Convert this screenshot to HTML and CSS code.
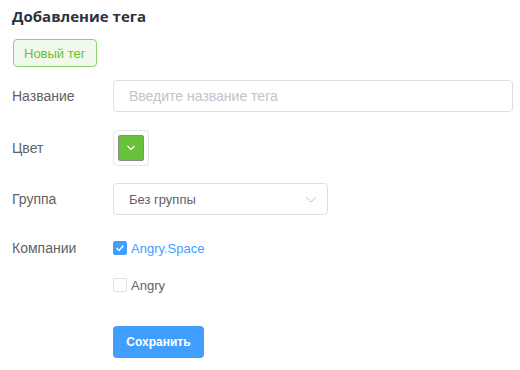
FILE: index.html
```html
<!DOCTYPE html>
<html lang="ru">
<head>
<meta charset="utf-8">
<link rel="stylesheet" href="styles.css">
</head>
<body>
<div class="page">
  <h1 class="title">Добавление тега</h1>
  <div class="preview"><span class="tag">Новый тег</span></div>
  <form class="form">
    <div class="row">
      <label class="label">Название</label>
      <div class="control">
        <div class="input"><span class="placeholder">Введите название тега</span></div>
      </div>
    </div>
    <div class="row row-color">
      <label class="label">Цвет</label>
      <div class="control">
        <div class="picker">
          <div class="swatch">
            <svg width="10" height="6" viewBox="0 0 10 6"><path d="M1.5 1 L5 4.5 L8.5 1" fill="none" stroke="#fff" stroke-width="1.2"/></svg>
          </div>
        </div>
      </div>
    </div>
    <div class="row">
      <label class="label">Группа</label>
      <div class="control">
        <div class="select">
          <span class="value">Без группы</span>
          <svg class="arrow" width="12" height="7" viewBox="0 0 12 7"><path d="M1 1 L6 6 L11 1" fill="none" stroke="#c0c4cc" stroke-width="1"/></svg>
        </div>
      </div>
    </div>
    <div class="row row-companies">
      <label class="label">Компании</label>
      <div class="control checks">
        <div class="check checked">
          <span class="box"><svg width="10" height="8" viewBox="0 0 10 8"><path d="M1.5 4 L4 6.5 L8.5 1.5" fill="none" stroke="#fff" stroke-width="1.4"/></svg></span>
          <span class="check-label">Angry.Space</span>
        </div>
        <div class="check">
          <span class="box"></span>
          <span class="check-label">Angry</span>
        </div>
      </div>
    </div>
    <div class="row row-actions">
      <div class="label"></div>
      <div class="control"><button type="button" class="btn">Сохранить</button></div>
    </div>
  </form>
</div>
</body>
</html>
```
FILE: styles.css
```css
* { box-sizing: border-box; }
html, body { margin: 0; padding: 0; background: #fff; }
body { font-family: "Liberation Sans", Arial, sans-serif; color: #606266; }
.page { padding: 6px 12px 0 12px; width: 520px; }
.title {
  margin: 0;
  font-family: "Open Sans", "Liberation Sans", sans-serif;
  font-weight: 700;
  font-size: 15px;
  line-height: 20px;
  color: #2b3240;
}
.preview { margin-top: 13px; height: 28px; display: flex; }
.tag {
  display: inline-flex; align-items: center;
  height: 28px; padding: 0 10px; margin-left: 1px;
  font-size: 13px;
  color: #67c23a;
  background: #f0f9eb;
  border: 1px solid #8fd16a;
  border-radius: 4px;
}
.form { margin-top: 13px; display: flex; flex-direction: column; }
.row { display: flex; align-items: center; min-height: 32px; margin-bottom: 18px; }
.label { width: 101px; flex: none; font-size: 14px; color: #606266; }
.control { flex: 1; }
.input {
  width: 400px; height: 32px;
  border: 1px solid #dcdfe6; border-radius: 4px;
  display: flex; align-items: center; padding: 0 15px;
  font-size: 14px;
}
.placeholder { color: #c0c4cc; }
.row-color { min-height: 36px; margin-bottom: 17px; }
.picker {
  width: 36px; height: 36px;
  border: 1px solid #e6e6e6; border-radius: 4px;
  padding: 4px;
}
.swatch {
  width: 100%; height: 100%;
  background: #67c23a;
  border: 1px solid #8a8a8a;
  border-radius: 2px;
  display: flex; align-items: center; justify-content: center;
}
.select {
  width: 215px; height: 32px;
  border: 1px solid #dcdfe6; border-radius: 4px;
  display: flex; align-items: center; justify-content: space-between;
  padding: 0 10px 0 15px;
  font-size: 13px; color: #606266;
}
.row-companies { align-items: flex-start; margin-top: 7px; margin-bottom: 0; }
.row-companies .label { line-height: 16px; }
.checks { display: flex; flex-direction: column; gap: 21px; }
.check { display: flex; align-items: center; height: 16px; }
.box {
  width: 14px; height: 14px; border: 1px solid #dcdfe6; border-radius: 2px;
  background: #fff; display: flex; align-items: center; justify-content: center;
  margin-right: 4px;
}
.checked .box { background: #409eff; border-color: #409eff; }
.check-label { font-size: 13px; color: #606266; }
.checked .check-label { color: #409eff; }
.row-actions { margin-top: 33px; }
.btn {
  width: 91px; height: 32px;
  background: #409eff; border: none; border-radius: 4px;
  color: #fff; font-family: "Liberation Sans", Arial, sans-serif;
  font-size: 12px; font-weight: 700;
  padding: 0;
}
```
